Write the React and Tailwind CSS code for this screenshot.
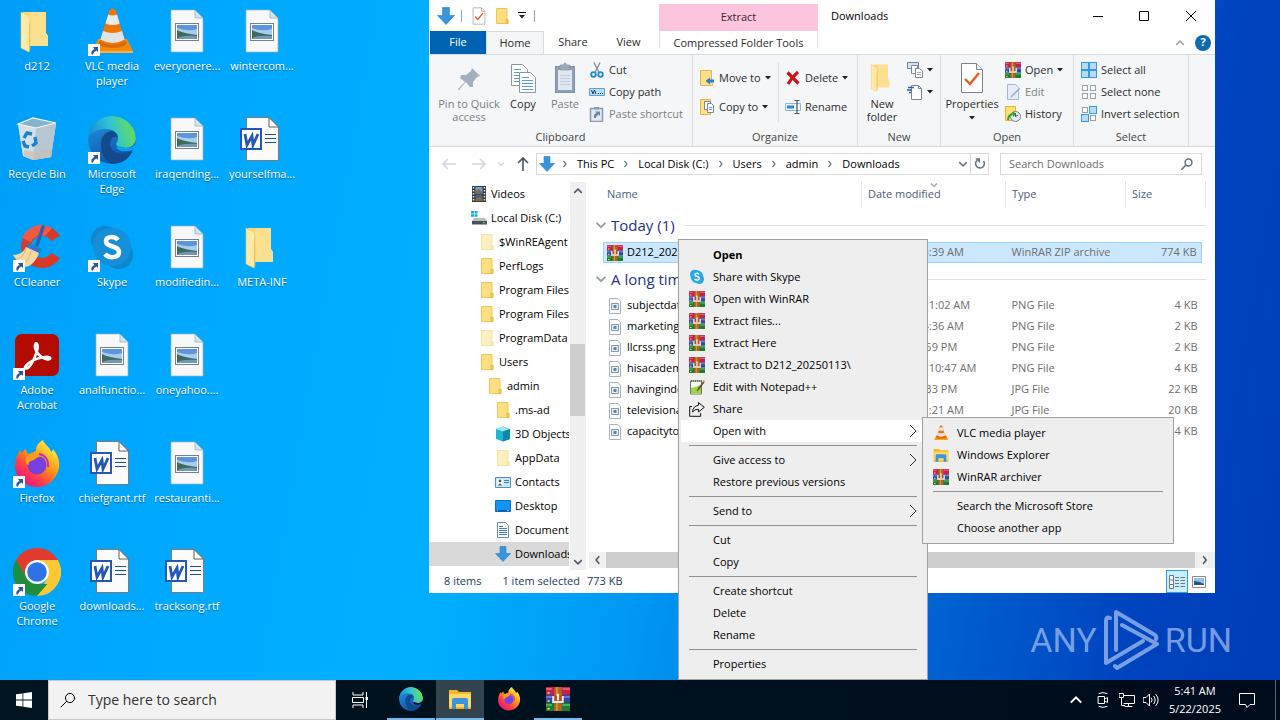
import React from "react";
import clsx from "clsx";

const stroke = { fill: "none", strokeLinecap: "round", strokeLinejoin: "round" };

/* ---------- icons ---------- */

function Folder({ className, pale }) {
  return (
    <svg viewBox="0 0 16 16" className={className}>
      <path d="M2.5.5h10.500V11l1 1v3.500H2.500z" fill={pale ? "#fdf0c0" : "#ffdf80"} stroke={pale ? "#f3e0a0" : "#e8b94a"} strokeWidth=".8" />
      <path d="M12 11.500h2v4h-2z" fill={pale ? "#fdeeb8" : "#ffd24d"} stroke={pale ? "#f0dc9c" : "#dfa92c"} strokeWidth=".6" />
    </svg>
  );
}

function OpenFolder({ className }) {
  return (
    <svg viewBox="0 0 48 48" className={className}>
      <path d="M10 4h23v21l2 3v10H10z" fill="#f9d978" />
      <path d="M17 4h16v21l2 3v10H17z" fill="#fbe08f" />
      <path d="M8 4l9 5v32l-1 3-8-4z" fill="#ffeaa8" stroke="#ecc765" strokeWidth=".6" />
      <path d="M16 20l1-11v32l-1 3z" fill="#e9bf5a" />
    </svg>
  );
}

function Cone({ className }) {
  return (
    <svg viewBox="0 0 48 48" className={className}>
      <path d="M10 31h29l6 12q0 2-2 2H6q-2 0-1-2z" fill="#f58a0b" />
      <path d="M4 43h41v2H4z" fill="#ffb03a" />
      <ellipse cx="24.500" cy="35" rx="14" ry="5" fill="#d96a04" />
      <path d="M21.500 2q3-3 6 0l9.500 31q-12.500 8-25 0z" fill="#ee7708" />
      <path d="M20.200 6.500q4.500 2 8.800 0l2.700 9q-7 3-14.200 0z" fill="#e8eaec" />
      <path d="M15 23q9.500 4 19 0l2.700 8.500q-12 7-24.400 0z" fill="#dfe3e6" />
    </svg>
  );
}

function RecycleBin({ className }) {
  return (
    <svg viewBox="0 0 48 48" className={className}>
      <path d="M5 8L20 2l23 5-5 34-18 3-10-4z" fill="#b9cfdc" />
      <path d="M5 8l18 4 20-5-5 34-18 3-10-4z" fill="#d2e0e8" />
      <path d="M23 12l20-5-5 34-18 3z" fill="#a9bcc9" opacity=".7" />
      <path d="M11 34l12 2 16-3-1 8-18 3-9-4z" fill="#cbbfb4" opacity=".7" />
      <path d="M5 8L20 2l23 5-20 5z" fill="#86b4cc" stroke="#f2f8fb" strokeWidth="1.200" />
      <g fill="none" stroke="#1e7fce" strokeWidth="3.400">
        <path d="M11 22l3-5 5 1" />
        <path d="M22 21l1 6-4 3" />
        <path d="M16 31l-4-1-2-5" />
      </g>
    </svg>
  );
}

function Edge({ className }) {
  return (
    <svg viewBox="0 0 48 48" className={className}>
      <defs>
        <linearGradient id="edgeTop" x1="0" y1=".6" x2="1" y2=".4">
          <stop offset="0" stopColor="#1a86d8" />
          <stop offset=".5" stopColor="#2fc3d3" />
          <stop offset="1" stopColor="#6be04f" />
        </linearGradient>
        <linearGradient id="edgeLeft" x1="0" y1="0" x2=".6" y2="1">
          <stop offset="0" stopColor="#2299e5" />
          <stop offset="1" stopColor="#0d4fa5" />
        </linearGradient>
        <clipPath id="edgeClip">
          <path d="M24 0a24 24 0 0 1 24 24q0 8-10 8l-8-2q-4 2 3 5 6 1 12-1-6 14-21 14A24 24 0 0 1 24 0z" />
        </clipPath>
      </defs>
      <g clipPath="url(#edgeClip)">
        <circle cx="24" cy="24" r="24" fill="url(#edgeLeft)" />
        <path d="M13 30c-1-8 4-15 12-15 4 0 6 3 5 6-7-2-9 6-7 10 2 7 12 9 22 3-4 10-12 14-20 14-8-3-12-10-12-18z" fill="#134a8e" />
        <path d="M0 23C1 9 11 0 24 0s24 10 24 22c0 7-6 10-11 10-6 0-9-2-9-4 0-1 2-2 2-6 0-5-5-9-12-9C9 13 2 17 0 23z" fill="url(#edgeTop)" />
      </g>
    </svg>
  );
}

function CCleaner({ className }) {
  return (
    <svg viewBox="0 0 48 48" className={className}>
      <path d="M47 12A21 21 0 1 0 47 34l-9-5a11 11 0 1 1 0-12z" fill="#d93a28" />
      <path d="M9 14a21 21 0 0 1 30-10l-7 8a11 11 0 0 0-14 6z" fill="#ee5a44" />
      <path d="M30 3l-6 18" stroke="#2a62b0" strokeWidth="3.500" strokeLinecap="round" />
      <path d="M15 19l14 6-3 5-13-6z" fill="#2f77c8" />
      <path d="M13 23l13 6c-3 9-9 14-15 14C7 40 3 36 0 31c6 0 11-3 13-8z" fill="#f4d9a4" />
      <path d="M13 25c-2 6-5 9-9 10M18 27c-1 6-4 10-8 13" stroke="#dcb678" strokeWidth="1" fill="none" />
    </svg>
  );
}

function Skype({ className, flat }) {
  const blue = flat ? "#28a8ea" : "#1490d8";
  return (
    <svg viewBox="0 0 48 48" className={className}>
      <rect x="3" y="2" width="28" height="28" rx="14" fill={flat ? blue : "#0f86cf"} />
      <rect x="17" y="17" width="28" height="28" rx="14" fill={flat ? blue : "#0e86d0"} />
      <circle cx="24" cy="23" r="19" fill={blue} />
      <path d="M30 16c-3-4-12-4-12 1 0 7 13 4 13 11 0 6-10 7-14 2" fill="none" stroke="#fff" strokeWidth="4.500" />
    </svg>
  );
}

function Acrobat({ className }) {
  return (
    <svg viewBox="0 0 48 48" className={className}>
      <rect x="2" y="2" width="44" height="42" rx="7" fill="#b30b00" />
      <path d="M12 35c3-5 11-9 20-10 8-1 6 4 1 2-7-2-12-9-11-14 1-4 4-1 2 6-2 6-5 13-8 16-2 2-5 2-4 0z" fill="none" stroke="#fff" strokeWidth="2.500" strokeLinejoin="round" />
    </svg>
  );
}

function Firefox({ className }) {
  return (
    <svg viewBox="0 0 48 48" className={className}>
      <defs>
        <linearGradient id="foxBody" x1=".85" y1=".1" x2=".2" y2=".95">
          <stop offset="0" stopColor="#fff04a" />
          <stop offset=".4" stopColor="#ff980e" />
          <stop offset=".75" stopColor="#ff3750" />
          <stop offset="1" stopColor="#e31587" />
        </linearGradient>
      </defs>
      <path d="M30 0c1 4 7 7 8 12 2-1 2-3 2-3 4 5 7 11 6 19-2 11-11 19-22 19C12 47 3 38 2 27c0-7 2-12 5-17 0 0 1 2 2 3 1-2 2-3 4-4 0 3 1 4 3 5l7-3c-1-4 3-9 7-11z" fill="url(#foxBody)" />
      <circle cx="24" cy="25" r="9.500" fill="#7a3fe0" />
      <path d="M13 17c4-4 12-5 16 0-4-1-5 1-8 3-3 1-6 1-5 5-4-1-4-5-3-8z" fill="#ff9a1c" />
      <path d="M26 14c6 1 10 6 9 13" fill="none" stroke="#b833b8" strokeWidth="2" />
    </svg>
  );
}

function Chrome({ className }) {
  return (
    <svg viewBox="0 0 48 48" className={className}>
      <path d="M24 12h20.800A24 24 0 0 1 24 48l10.400-18z" fill="#fcc934" />
      <path d="M3.200 12A24 24 0 0 1 44.800 12H24L13.600 30z" fill="#e33b2e" />
      <path d="M3.200 12l10.400 18L24 36h10.400L24 48A24 24 0 0 1 3.200 12z" fill="#1e8e3e" />
      <circle cx="24" cy="24" r="12" fill="#fff" />
      <circle cx="24" cy="24" r="9.800" fill="#2f73e8" />
    </svg>
  );
}

function ImageFile({ className }) {
  return (
    <svg viewBox="0 0 48 48" className={className}>
      <path d="M8 2h24l8 8v34H8z" fill="#f8f8f8" stroke="#9eb4c2" strokeWidth=".7" />
      <path d="M32 2v8h8z" fill="#cfe8f6" stroke="#9aa8b2" strokeWidth=".7" />
      <rect x="12.500" y="15.500" width="23" height="17" fill="#fff" stroke="#70808c" />
      <path d="M14 17h20v14H14z" fill="#a9cdef" />
      <path d="M14 17h20v4q-8 3-20-1z" fill="#5d95da" />
      <path d="M14 22q5 3 20 5v4H14z" fill="#3e6b60" />
      <path d="M16 29q8-2 18-1v3H14z" fill="#7499b4" />
    </svg>
  );
}

function WordFile({ className }) {
  return (
    <svg viewBox="0 0 48 48" className={className}>
      <path d="M8.500 1.500H31l9.500 9.500v33.500h-32z" fill="#fbfbfb" stroke="#7b7b7b" />
      <path d="M31 1.500V11h9.500z" fill="#fff" stroke="#5f5f5f" />
      <path d="M27 18.500h11M27 22.500h11M27 26.500h11" stroke="#1f4fa3" strokeWidth="1.200" />
      <rect x="3" y="13" width="20" height="20" fill="#fff" stroke="#2457b5" strokeWidth="2" />
      <path d="M7 18l2 11 5-9 1 9 5-11" fill="none" stroke="#2457b5" strokeWidth="2.800" />
    </svg>
  );
}

function ShortcutBadge() {
  return (
    <svg viewBox="0 0 12 12" className="absolute bottom-0 left-0 size-3">
      <path d="M0 0h12v12H0z" fill="#fff" />
      <path d="M3.500 10.500q-1-4 3-5.500L5 3h5v5L8.500 6.500Q5.500 7.500 5 10.500z" fill="#2b5797" />
    </svg>
  );
}

function WinRar({ className }) {
  return (
    <svg viewBox="0 0 16 16" className={className}>
      <path d="M0 0h16v5.300H0z" fill="#c4204a" />
      <path d="M0 5.300h16v5.200H0z" fill="#3346a8" />
      <path d="M0 10.500h16V16H0z" fill="#1f7a34" />
      <path d="M0 .8h4v1H0zM11 .8h5v1h-5z" fill="#ef6c8a" />
      <path d="M0 6.200h4v1H0zM11 6.200h5v1h-5z" fill="#6f8ae8" />
      <path d="M0 11.500h4v1H0zM11 11.500h5v1h-5z" fill="#58c46a" />
      <path d="M1 3.500h1.500v1H1zM1 8.800h1.500v1H1zM1 14h1.500v1H1z" fill="#ffe14d" />
      <path d="M5.500 0h5v16h-5z" fill="#b5651d" />
      <path d="M6.800 0h1v16h-1z" fill="#e09a40" />
      <path d="M4.800 6v4h6.400V6" fill="#b5501d" stroke="#f1ece2" strokeWidth="1.300" />
      <path d="M7.300 4.500h1.400V9H7.300z" fill="#f1ece2" />
    </svg>
  );
}

function Explorer({ className }) {
  return (
    <svg viewBox="0 0 24 24" className={className}>
      <path d="M1 3h8l2 2h12v17H1z" fill="#f5b62c" />
      <path d="M1 7h22v13H1z" fill="#ffd968" />
      <path d="M4 13q0-2 2-2h12q2 0 2 2v9h-4v-5H8v5H4z" fill="#3d95dd" />
    </svg>
  );
}

function DownArrow({ className }) {
  return (
    <svg viewBox="0 0 16 16" className={className}>
      <path d="M5 .5h6v7h4.500L8 15.500.5 7.500H5z" fill="#3a94dc" stroke="#2b7ec4" strokeWidth=".6" />
    </svg>
  );
}

function CheckPage({ className }) {
  return (
    <svg viewBox="0 0 24 32" className={className}>
      <path d="M1.500 1.500h15l6 6v23h-21z" fill="#fff" stroke="#7d8286" />
      <path d="M16.500 1.500v6h6" fill="#eef1f3" stroke="#7d8286" />
      <path d="M5 17l5 5 9-11" fill="none" stroke="#e65a24" strokeWidth="2.400" />
    </svg>
  );
}

function Pin({ className }) {
  return (
    <svg viewBox="0 0 32 32" className={className}>
      <path d="M19 6l8 8-3 1-4 5v5l-3 0-4-5-7 8-1 0 0-1 7-7-5-4 1-3h5l5-4z" fill="#a3b0bf" />
    </svg>
  );
}

function CopyPages({ className }) {
  return (
    <svg viewBox="0 0 32 32" className={className}>
      <g fill="#fff" stroke="#8b96a0">
        <path d="M4.500 2.500h11l5 5v16h-16z" />
        <path d="M12.500 10.500h11l5 5v15h-16z" />
      </g>
      <path d="M7 7.500h7M7 10.500h5M7 13.500h5M7 16.500h5M7 19.500h5M15 15.500h7M15 18.500h11M15 21.500h11M15 24.500h11M15 27.500h11" stroke="#5a9be0" />
    </svg>
  );
}

function Clipboard({ className }) {
  return (
    <svg viewBox="0 0 32 32" className={className}>
      <rect x="6.500" y="4.500" width="19" height="26" fill="#8fa1b8" stroke="#8091a8" />
      <path d="M9 8h14v20H9z" fill="#e0e7f1" />
      <path d="M11 13.500h10M11 16.500h10M11 19.500h10M11 22.500h10" stroke="#c0cddd" />
      <path d="M11 3h3q2-4 4 0h3v5H11z" fill="#9aa8b8" stroke="#7f8fa2" strokeWidth=".6" />
    </svg>
  );
}

function Scissors({ className }) {
  return (
    <svg viewBox="0 0 16 16" className={className}>
      <path d="M5 .5l5 10M11 .5l-5 10" stroke="#8a929a" strokeWidth="1.400" />
      <circle cx="4.500" cy="12.500" r="2.300" fill="none" stroke="#1f88cf" strokeWidth="1.800" />
      <circle cx="11.500" cy="12.500" r="2.300" fill="none" stroke="#1f88cf" strokeWidth="1.800" />
    </svg>
  );
}

function PathIcon({ className }) {
  return (
    <svg viewBox="0 0 16 16" className={className}>
      <path d="M.5 4.500h15v7H.5z" fill="#b9dcf7" stroke="#5ba3de" />
      <path d="M2.500 6l1.500 4 1.500-4L7 10M9 9.500h1M11 9.500h1M13 9.500h1" fill="none" stroke="#1c3f66" />
    </svg>
  );
}

function PasteShortcut({ className }) {
  return (
    <svg viewBox="0 0 16 16" className={className}>
      <path d="M1.500 2.500h12v13h-12z" fill="#e3e9f1" stroke="#8b9bb0" strokeWidth="1.500" />
      <path d="M5 1h5v2.500H5z" fill="#8b9bb0" />
      <path d="M5 12q-1-4 2.500-5L6 5.500h5v4.500L9.500 8.500Q7 9.500 7 12z" fill="#6f85a5" />
    </svg>
  );
}

function MoveTo({ className }) {
  return (
    <svg viewBox="0 0 16 16" className={className}>
      <path d="M1.500 .5h11v12l1 1v2h-12z" fill="#ffe08a" stroke="#e5b64a" />
      <path d="M15 9.500h-4V7.500L6.500 11l4.500 3.500v-2h4z" fill="#2b7cd3" />
    </svg>
  );
}

function CopyTo({ className }) {
  return (
    <svg viewBox="0 0 16 16" className={className}>
      <path d="M1.500 .5h10v15h-10z" fill="#ffe08a" stroke="#e5b64a" />
      <path d="M5.500 2.500h6v8h-6z" fill="#fff" stroke="#7a8894" />
      <path d="M8.500 4.500h4l2 2v7h-6z" fill="#fff" stroke="#7a8894" />
      <path d="M10 8.500h3M10 10.500h3" stroke="#5a9be0" />
    </svg>
  );
}

function DeleteX({ className }) {
  return (
    <svg viewBox="0 0 16 16" className={className}>
      <path d="M2.500 2.500q4 4 11 11M13 2q-6 5-10 12" fill="none" stroke="#d0111b" strokeWidth="3.200" />
    </svg>
  );
}

function RenameIcon({ className }) {
  return (
    <svg viewBox="0 0 16 16" className={className}>
      <path d="M.5 4.500h15v7H.5z" fill="#eef6fd" stroke="#8fb6d8" />
      <path d="M2 6.500h7v3H2z" fill="#2a86d6" />
      <path d="M9.500 1.500h5M12 1.500v13M9.500 14.500h5" stroke="#555" strokeWidth="1.200" />
    </svg>
  );
}

function NewItem({ className }) {
  return (
    <svg viewBox="0 0 16 16" className={className}>
      <path d="M.5 .5h11v6H.5z" fill="#cfe6f8" stroke="#6d8294" />
      <path d="M4.500 3.500h6v8h-6z" fill="#fff" stroke="#7a8894" />
      <path d="M8.500 6.500h4l3 2.500v6.500h-7z" fill="#fff" stroke="#7a8894" />
      <path d="M10 10.500h4M10 12.500h4" stroke="#9aa8b4" />
    </svg>
  );
}

function EasyAccess({ className }) {
  return (
    <svg viewBox="0 0 16 16" className={className}>
      <path d="M4.500 1.500h7l3 3v11h-10z" fill="#fff" stroke="#7a8894" />
      <path d="M11.500 1.500v3h3" fill="none" stroke="#7a8894" />
      <path d="M1 3.500h6M0 6h5M2 8.500h2" stroke="#2a62a8" strokeWidth="1.300" />
    </svg>
  );
}

function EditIcon({ className }) {
  return (
    <svg viewBox="0 0 16 16" className={className}>
      <path d="M2.500.5h8l3 3v12h-11z" fill="#e6edf8" stroke="#a3b6d3" />
      <path d="M14 4l-8 8-1 2 2-1 8-8z" fill="#93aacd" />
    </svg>
  );
}

function HistoryIcon({ className }) {
  return (
    <svg viewBox="0 0 16 16" className={className}>
      <path d="M.5.500h10v14h-10z" fill="#ffe070" stroke="#e0b53f" />
      <circle cx="10.500" cy="10.500" r="5" fill="#e4ebf0" stroke="#76838d" />
      <path d="M10.500 7v3.500l2.500-1.500" fill="none" stroke="#444" />
      <path d="M2 14q0-6 6-7V5l3 3-3 3V9q-4 1-4 5z" fill="#37a03a" />
    </svg>
  );
}

function SelectGrid({ className, on }) {
  const cells = [[0.5, 0.5], [8.5, 0.5], [0.5, 8.5], [8.5, 8.5]];
  return (
    <svg viewBox="0 0 16 16" className={className}>
      {cells.map(([x, y], i) => {
        const lit = on[i];
        return lit ? (
          <rect key={i} x={x} y={y} width="7" height="7" fill="#b5dcfb" stroke="#3b97e0" />
        ) : (
          <rect key={i} x={x + 1} y={y + 1} width="5" height="5" fill="#fff" stroke="#9a9fa3" />
        );
      })}
    </svg>
  );
}

function Film({ className }) {
  return (
    <svg viewBox="0 0 16 16" className={className}>
      <path d="M1 0h14v16H1z" fill="#3a3a3a" />
      <path d="M2.500 1v14M13.500 1v14" stroke="#e6e6e6" strokeWidth="1.500" strokeDasharray="1.500 1.500" />
      <path d="M4.500 1h7v6.500h-7z" fill="#6aa7d8" />
      <path d="M4.500 8.500h7V15h-7z" fill="#39648c" />
      <path d="M4.500 5l3-2 4 3v1.500h-7zM4.500 13l4-2 3 1v3h-7z" fill="#8a6848" />
    </svg>
  );
}

function Drive({ className }) {
  return (
    <svg viewBox="0 0 16 16" className={className}>
      <path d="M0 1h3v2.500H0zM3.600 1h3v2.500h-3zM0 4.200h3v2.500H0zM3.600 4.200h3v2.500h-3z" fill="#16a8e8" />
      <path d="M3 8h11l2 3H1z" fill="#b9bec3" />
      <path d="M1 11h15v3.500H1z" fill="#4a4f54" />
      <path d="M12 12.200h2v1h-2z" fill="#5be37a" />
    </svg>
  );
}

function Cube({ className }) {
  return (
    <svg viewBox="0 0 16 16" className={className}>
      <path d="M1 3l7-2.500L15 3v10l-7 2.500L1 13z" fill="#1fb6cf" />
      <path d="M1 3l7 2.500L15 3 8 .5z" fill="#9be8f2" />
      <path d="M8 5.500L15 3v10l-7 2.500z" fill="#0e87a8" />
    </svg>
  );
}

function Contact({ className }) {
  return (
    <svg viewBox="0 0 16 16" className={className}>
      <path d="M.5 3.500h15v10H.5z" fill="#cbe6f8" stroke="#4c8fc0" />
      <path d="M2.500 5h5v6.500h-5z" fill="#fff" />
      <circle cx="5" cy="7" r="1.400" fill="#555" />
      <path d="M3 11.500q2-4 4 0z" fill="#4b5a66" />
      <path d="M9 6.500h5M9 8.500h5" stroke="#3f82b8" />
    </svg>
  );
}

function DesktopIcon({ className }) {
  return (
    <svg viewBox="0 0 16 16" className={className}>
      <path d="M.5 2.500h15v11H.5z" fill="#1294f0" stroke="#0d6fc0" />
      <path d="M1 12h14v1.500H1z" fill="#0a5ea8" />
      <path d="M2 12.700h1M12 12.700h2" stroke="#fff" strokeWidth=".6" />
    </svg>
  );
}

function DocIcon({ className }) {
  return (
    <svg viewBox="0 0 16 16" className={className}>
      <path d="M2.500.5h8l3 3v12h-11z" fill="#fff" stroke="#6c8ba4" />
      <path d="M4 4.500h4M4 6.500h8M4 8.500h8M4 10.500h8M4 12.500h8" stroke="#3f7fb5" />
    </svg>
  );
}

function SmallImage({ className }) {
  return (
    <svg viewBox="0 0 16 16" className={className}>
      <path d="M2.500.5h8.500l2.500 3v12h-11z" fill="#fdfdfd" stroke="#a9b2b8" />
      <path d="M4.500 5.500h7v6h-7z" fill="#e6eff6" stroke="#8796a3" />
      <path d="M6.500 7h3v3h-3z" fill="#5a86a8" />
    </svg>
  );
}

function Notepad({ className }) {
  return (
    <svg viewBox="0 0 16 16" className={className}>
      <path d="M1.500 2h11v13h-11z" fill="#f5f8ee" stroke="#6f756a" />
      <path d="M2 9q5-1 10-3v8.500H2z" fill="#9fd33c" />
      <path d="M2 2h11" stroke="#555" strokeWidth="1.500" strokeDasharray="1 1" />
      <path d="M14.500 2L8.500 10l-.8 2.200 2-1.200 6-8z" fill="#5a4632" />
      <path d="M14.500.8L16 2l-1 1.500-1.500-1.200z" fill="#e7a13c" />
    </svg>
  );
}

function ShareIcon({ className }) {
  return (
    <svg viewBox="0 0 16 16" className={className}>
      <path d="M3 5.500H.7v9.800h11V12" fill="none" stroke="#111" />
      <path d="M9.500 1.500l5.800 4.800-5.800 4.700V8.300Q5.500 8 3.500 11q.5-6 6-6.700z" fill="none" stroke="#111" />
    </svg>
  );
}

function Caret({ className }) {
  return (
    <svg viewBox="0 0 6 4" className={clsx("h-1 w-1.5 shrink-0", className)}>
      <path d="M0 0h6L3 3.500z" fill="#222" />
    </svg>
  );
}

function Chevron({ dir = "right", className }) {
  const d = {
    right: "M5 2l5 6-5 6",
    down: "M2 5l6 6 6-6",
    up: "M2 11l6-6 6 6",
    left: "M10 2L5 8l5 6",
  }[dir];
  return (
    <svg viewBox="0 0 16 16" className={className}>
      <path d={d} fill="none" stroke="currentColor" strokeWidth="2.400" />
    </svg>
  );
}

function Magnifier({ className }) {
  return (
    <svg viewBox="0 0 16 16" className={className} {...stroke} stroke="currentColor">
      <circle cx="10" cy="6" r="4.600" />
      <path d="M6.500 9.500L1 15" />
    </svg>
  );
}

/* ---------- desktop ---------- */

const desktopItems = [
  { label: "d212", Icon: OpenFolder },
  { label: "Recycle Bin", Icon: RecycleBin },
  { label: "CCleaner", Icon: CCleaner, link: true },
  { label: "Adobe Acrobat", Icon: Acrobat, link: true },
  { label: "Firefox", Icon: Firefox, link: true },
  { label: "Google Chrome", Icon: Chrome, link: true },
  { label: "VLC media player", Icon: Cone, link: true },
  { label: "Microsoft Edge", Icon: Edge, link: true },
  { label: "Skype", Icon: Skype, link: true },
  { label: "analfunctio...", Icon: ImageFile },
  { label: "chiefgrant.rtf", Icon: WordFile },
  { label: "downloads...", Icon: WordFile },
  { label: "everyonere...", Icon: ImageFile },
  { label: "iraqending...", Icon: ImageFile },
  { label: "modifiedin...", Icon: ImageFile },
  { label: "oneyahoo....", Icon: ImageFile },
  { label: "restauranti...", Icon: ImageFile },
  { label: "tracksong.rtf", Icon: WordFile },
  { label: "wintercom...", Icon: ImageFile },
  { label: "yourselfma...", Icon: WordFile },
  { label: "META-INF", Icon: OpenFolder },
];

function Desktop() {
  return (
    <div className="grid w-max auto-cols-[75px] grid-flow-col grid-rows-[repeat(6,108px)]">
      {desktopItems.map(({ label, Icon, link }) => (
        <button key={label} className="flex flex-col items-center pt-2 pr-px text-white">
          <span className="relative size-12 shrink-0">
            <Icon className="size-12" />
            {link && <ShortcutBadge />}
          </span>
          <span className="mt-0.5 leading-[15px] [text-shadow:0_1px_1px_rgba(0,40,90,0.6)]">{label}</span>
        </button>
      ))}
    </div>
  );
}

/* ---------- explorer window ---------- */

function TitleBar() {
  return (
    <div className="flex h-[31px] items-stretch">
      <div className="flex w-[230px] items-center pl-2">
        <DownArrow className="mr-1.5 size-[18px]" />
        <span className="mr-2.5 h-3 w-px bg-gray-400" />
        <CheckPage className="h-[18px] w-3.5" />
        <Folder className="ml-2 size-4" />
        <span className="ml-2 flex flex-col items-center gap-0.5">
          <span className="h-px w-2 bg-black" />
          <Caret />
        </span>
        <span className="ml-2 h-3 w-px bg-gray-400" />
      </div>
      <div className="mt-1 flex w-[159px] items-center justify-center bg-[#fcc4dd] text-[#3b2430]">Extract</div>
      <div className="flex flex-1 items-center pt-px pl-[13px] text-black">Downloads</div>
      <div className="flex text-black">
        <button aria-label="Minimize" className="flex w-[46px] items-center justify-center">
          <svg viewBox="0 0 10 10" className="size-2.5"><path d="M0 5.500h10" stroke="currentColor" /></svg>
        </button>
        <button aria-label="Maximize" className="flex w-[46px] items-center justify-center">
          <svg viewBox="0 0 10 10" className="size-2.5"><path d="M.5.5h9v9h-9z" fill="none" stroke="currentColor" /></svg>
        </button>
        <button aria-label="Close" className="flex w-12 items-center justify-center">
          <svg viewBox="0 0 10 10" className="size-2.5"><path d="M0 0l10 10M10 0L0 10" stroke="currentColor" /></svg>
        </button>
      </div>
    </div>
  );
}

function Tabs() {
  return (
    <div className="flex h-[23px] items-stretch">
      <button className="ml-px w-14 bg-[#0063b1] text-white">File</button>
      <button className="-mb-px w-[58px] border border-b-0 border-[#dadbdc] bg-[#f5f6f7]">Home</button>
      <button className="w-[58px]">Share</button>
      <button className="w-[57px] pr-1">View</button>
      <button className="mb-1.5 w-[159px] border-x border-[#e3dfe1] pt-1.5 leading-none">Compressed Folder Tools</button>
      <div className="flex flex-1 items-center justify-end gap-2.5 pr-1">
        <Chevron dir="up" className="size-2.5 text-gray-400" />
        <button aria-label="Help" className="flex size-4 items-center justify-center rounded-full bg-[#0f6ab4] font-bold text-white">?</button>
      </div>
    </div>
  );
}

function Group({ title, className, children }) {
  return (
    <div className={clsx("flex flex-col border-r border-[#dcdddf]", className)}>
      <div className="flex flex-1">{children}</div>
      <div className="pb-0.5 text-center leading-[14px] text-[#444]">{title}</div>
    </div>
  );
}

function Big({ Icon, label, caret, off, iconClass = "size-8", className }) {
  return (
    <button className={clsx("flex flex-col items-center pt-[7px]", off ? "text-[#7b7f84]" : "text-[#2b2b2b]", className)}>
      <span className="flex h-8 items-center">
        <Icon className={iconClass} />
      </span>
      <span className="mt-[3px] leading-[13px]">{label}</span>
      {caret && <Caret className="mt-1.5" />}
    </button>
  );
}

function Small({ Icon, label, caret, off, className, ...rest }) {
  return (
    <button className={clsx("flex h-[22px] items-center gap-1 whitespace-nowrap", off ? "text-[#7b7f84]" : "text-[#2b2b2b]", className)}>
      <Icon className="size-4 shrink-0" {...rest} />
      {label}
      {caret && <Caret />}
    </button>
  );
}

const gridAll = [1, 1, 1, 1];
const gridNone = [0, 0, 0, 0];
const gridSwap = [0, 1, 1, 0];

function Ribbon() {
  return (
    <div className="flex h-[93px] border-y border-[#dadbdc] bg-[#f5f6f7]">
      <Group title="Clipboard" className="w-[264px]">
        <Big Icon={Pin} label="Pin to Quick access" off className="ml-2 w-16" />
        <Big Icon={CopyPages} label="Copy" className="w-11" />
        <Big Icon={Clipboard} label="Paste" off className="w-10" />
        <div className="pt-1 pl-1">
          <Small Icon={Scissors} label="Cut" />
          <Small Icon={PathIcon} label="Copy path" />
          <Small Icon={PasteShortcut} label="Paste shortcut" off />
        </div>
      </Group>
      <Group title="Organize" className="w-[165px]">
        <div className="my-2 flex w-[86px] flex-col gap-[7px] border-r border-[#dcdddf] pt-1 pl-1.5">
          <Small Icon={MoveTo} label="Move to" caret />
          <Small Icon={CopyTo} label="Copy to" caret />
        </div>
        <div className="my-2 flex flex-col gap-[7px] pt-1 pl-1.5">
          <Small Icon={DeleteX} label="Delete" caret />
          <Small Icon={RenameIcon} label="Rename" />
        </div>
      </Group>
      <Group title="New" className="w-[83px]">
        <Big Icon={OpenFolder} label="New folder" className="w-12" />
        <div className="pt-1 pl-px">
          <Small Icon={NewItem} caret />
          <Small Icon={EasyAccess} caret />
        </div>
      </Group>
      <Group title="Open" className="w-[133px]">
        <Big Icon={CheckPage} iconClass="h-8 w-6" label="Properties" caret className="w-[62px]" />
        <div className="pt-1 pl-0.5">
          <Small Icon={WinRar} label="Open" caret />
          <Small Icon={EditIcon} label="Edit" off />
          <Small Icon={HistoryIcon} label="History" />
        </div>
      </Group>
      <Group title="Select" className="w-[115px]">
        <div className="pt-1 pl-[7px]">
          <Small Icon={SelectGrid} label="Select all" on={gridAll} />
          <Small Icon={SelectGrid} label="Select none" on={gridNone} />
          <Small Icon={SelectGrid} label="Invert selection" on={gridSwap} />
        </div>
      </Group>
    </div>
  );
}

function Arrow({ d, className }) {
  return (
    <svg viewBox="0 0 16 16" className={className}>
      <path d={d} fill="none" stroke="currentColor" strokeWidth="1.600" />
    </svg>
  );
}

const crumbs = ["This PC", "Local Disk (C:)", "Users", "admin", "Downloads"];

function AddressBar() {
  return (
    <div className="flex h-[34px] items-center pr-[13px] pl-3">
      <button aria-label="Back" className="mr-3.5 text-gray-300"><Arrow className="size-4" d="M15 8H2M7 3L2 8l5 5" /></button>
      <button aria-label="Forward" className="mr-2.5 text-gray-300"><Arrow className="size-4" d="M1 8h13M9 3l5 5-5 5" /></button>
      <Chevron dir="down" className="mr-2.5 size-2 text-gray-300" />
      <button aria-label="Up" className="mr-[5px] text-gray-600"><Arrow className="size-4" d="M8 15V2M3 7l5-5 5 5" /></button>
      <nav className="flex h-[22px] flex-1 items-center border border-[#d9d9d9] pl-0.5 text-black">
        <DownArrow className="-mr-0.5 size-4" />
        {crumbs.map((c) => (
          <React.Fragment key={c}>
            <Chevron className="mx-2 size-2 text-gray-500" />
            <a href="#" className="whitespace-nowrap">{c}</a>
          </React.Fragment>
        ))}
        <Chevron dir="down" className="mr-0.5 ml-auto size-2.5 text-gray-500" />
        <button aria-label="Refresh" className="flex h-full w-[18px] items-center justify-center border-l border-[#d9d9d9] text-gray-500">
          <svg viewBox="0 0 16 16" className="size-3.5">
            <path d="M12 4.500a5 5 0 1 1-7-1" fill="none" stroke="currentColor" strokeWidth="1.800" />
            <path d="M2.500 1.500h5.500v5.500z" fill="currentColor" />
          </svg>
        </button>
      </nav>
      <label className="ml-[11px] flex h-[22px] w-[202px] items-center border border-[#d9d9d9] pr-2 pl-2">
        <input aria-label="Search Downloads" placeholder="Search Downloads" className="min-w-0 flex-1 outline-none placeholder:text-[#6d6d6d]" />
        <Magnifier className="size-3 stroke-2 text-gray-500" />
      </label>
    </div>
  );
}

const navItems = [
  ["Videos", Film, "pl-[42px]"],
  ["Local Disk (C:)", Drive, "pl-[42px]"],
  ["$WinREAgent", Folder, "pl-[50px]", true],
  ["PerfLogs", Folder, "pl-[50px]"],
  ["Program Files", Folder, "pl-[50px]"],
  ["Program Files (x86)", Folder, "pl-[50px]"],
  ["ProgramData", Folder, "pl-[50px]", true],
  ["Users", Folder, "pl-[50px]"],
  ["admin", Folder, "pl-[58px]"],
  [".ms-ad", Folder, "pl-[66px]"],
  ["3D Objects", Cube, "pl-[66px]"],
  ["AppData", Folder, "pl-[66px]", true],
  ["Contacts", Contact, "pl-[66px]"],
  ["Desktop", DesktopIcon, "pl-[66px]"],
  ["Documents", DocIcon, "pl-[66px]"],
  ["Downloads", DownArrow, "pl-[66px]"],
];

function NavTree() {
  return (
    <div className="flex w-[157px] shrink-0">
      <ul className="mr-px min-w-0 flex-1 overflow-hidden pt-px text-black">
        {navItems.map(([name, Icon, pad, pale]) => (
          <li key={name} className={clsx("flex h-6 items-center gap-1 whitespace-nowrap", pad, name === "Downloads" && "bg-[#d9d9d9]")}>
            {Icon === Folder ? <Folder className="size-4 shrink-0" pale={pale} /> : <Icon className="size-4 shrink-0" />}
            {name}
          </li>
        ))}
      </ul>
      <div className="mt-px flex w-4 flex-col bg-[#f0f0f0] text-gray-600">
        <button aria-label="Scroll up" className="flex h-[17px] items-center justify-center"><Chevron dir="up" className="size-2.5" /></button>
        <div className="flex-[145]" />
        <div className="mr-px flex-[72] bg-[#cdcdcd]" />
        <div className="flex-[137]" />
        <button aria-label="Scroll down" className="flex h-[17px] items-center justify-center"><Chevron dir="down" className="size-2.5" /></button>
      </div>
    </div>
  );
}

const archive = { name: "D212_20250113.zip", date: "5/22/2025 5:39 AM", type: "WinRAR ZIP archive", size: "774 KB" };

const files = [
  { name: "subjectdata.png", date: "11/9/2022 11:02 AM", type: "PNG File", size: "4 KB" },
  { name: "marketingof.png", date: "7/24/2023 4:36 AM", type: "PNG File", size: "2 KB" },
  { name: "llcrss.png", date: "6/4/2021 2:59 PM", type: "PNG File", size: "2 KB" },
  { name: "hisacademy.png", date: "10/12/2021 10:47 AM", type: "PNG File", size: "4 KB" },
  { name: "havingindex.jpg", date: "3/8/2022 5:33 PM", type: "JPG File", size: "22 KB" },
  { name: "televisionart.jpg", date: "8/15/2022 1:21 AM", type: "JPG File", size: "20 KB" },
  { name: "capacitytop.png", date: "9/17/2021 6:12 AM", type: "PNG File", size: "4 KB" },
];

function GroupRow({ title, className }) {
  return (
    <tr>
      <td colSpan={4} className={clsx("p-0", className)}>
        <div className="flex items-center pl-1.5">
          <Chevron dir="down" className="mr-1 size-3 text-gray-400" />
          <span className="text-[15px] leading-5 text-[#1e3287]">{title}</span>
          <span className="ml-2 h-px flex-1 bg-[#e2e2e2]" />
        </div>
      </td>
    </tr>
  );
}

function FileRow({ file, Icon, selected }) {
  const cell = clsx("flex h-[21px] items-center whitespace-nowrap", selected && "border-y border-[#99d1ff] bg-[#cce8ff]");
  return (
    <tr className="text-[#6d6d6d]">
      <td className="p-0">
        <div className={clsx(cell, "ml-3.5 gap-1 text-black", selected ? "border-l pl-[3px]" : "pl-1")}>
          <Icon className="size-4 shrink-0" />
          {file.name}
        </div>
      </td>
      <td className="p-0"><div className={clsx(cell, "pl-1.5")}>{file.date}</div></td>
      <td className="p-0"><div className={clsx(cell, "pl-1.5")}>{file.type}</div></td>
      <td className="p-0"><div className={clsx(cell, "mr-1 justify-end pr-1", selected && "border-r")}>{file.size}</div></td>
    </tr>
  );
}

const th = "relative border-r border-[#e5e5e5] pl-1.5 text-left font-normal";

function FileList() {
  return (
    <div className="ml-[3px] flex min-w-0 flex-1 flex-col">
      <div className="flex-1 pr-[9px]">
        <table className="w-full table-fixed border-collapse">
          <thead>
            <tr className="h-[27px] text-[#4c607a]">
              <th className={clsx(th, "pl-[18px]")}>Name</th>
              <th className={clsx(th, "w-36")}>
                Date modified
                <Chevron dir="down" className="absolute top-0 left-1/2 -ml-1 size-2 text-gray-400" />
              </th>
              <th className={clsx(th, "w-[120px]")}>Type</th>
              <th className={clsx(th, "w-20")}>Size</th>
            </tr>
          </thead>
          <tbody>
            <GroupRow title="Today (1)" className="h-[34px]" />
            <FileRow file={archive} Icon={WinRar} selected />
            <GroupRow title="A long time ago (7)" className="h-8" />
            {files.map((f) => (
              <FileRow key={f.name} file={f} Icon={SmallImage} />
            ))}
          </tbody>
        </table>
      </div>
      <div className="mb-0.5 flex h-4 bg-[#f0f0f0] text-gray-600">
        <button aria-label="Scroll left" className="flex w-[17px] items-center justify-center"><Chevron dir="left" className="size-2.5" /></button>
        <div className="flex-1 bg-[#cdcdcd]" />
        <button aria-label="Scroll right" className="flex w-5 items-center justify-center"><Chevron className="size-2.5" /></button>
      </div>
    </div>
  );
}

function StatusBar() {
  return (
    <div className="flex h-[23px] items-center pr-[5px] pl-[15px] text-[#1e395b]">
      <span className="mr-[21px]">8 items</span>
      <span className="mr-[7px]">1 item selected</span>
      <span>773 KB</span>
      <button aria-label="Details view" className="ml-auto flex h-[23px] w-[22px] items-center justify-center border border-[#26a0da] bg-[#cbeefc]">
        <svg viewBox="0 0 16 14" className="h-3.5 w-4">
          <path d="M.5.5h4v13h-4zM.5 5h4M.5 9.500h4" fill="#fff" stroke="#6b7a86" />
          <path d="M6 2.500h4M11.500 2.500H16M6 5.500h4M11.500 5.500H16M6 8.500h4M11.500 8.500H16M6 11.500h4M11.500 11.500H16" stroke="#6b7a86" />
        </svg>
      </button>
      <button aria-label="Large icons" className="flex h-[23px] w-[22px] items-center justify-center">
        <svg viewBox="0 0 14 12" className="h-3 w-3.5">
          <path d="M.5.5h13v11H.5z" fill="#fff" stroke="#8a8a8a" />
          <path d="M2 2h10v7H2z" fill="#8fc1ea" />
          <path d="M2 5q5 0 10 3v1H2z" fill="#28527a" />
        </svg>
      </button>
    </div>
  );
}

function ExplorerWindow() {
  return (
    <section className="absolute top-0 right-[65px] bottom-[87px] left-[429px] flex flex-col bg-white text-[#2b2b2b]">
      <TitleBar />
      <Tabs />
      <Ribbon />
      <AddressBar />
      <div className="flex min-h-0 flex-1">
        <NavTree />
        <FileList />
      </div>
      <StatusBar />
    </section>
  );
}

/* ---------- context menus ---------- */

const mainMenu = [
  { label: "Open", bold: true },
  { label: "Share with Skype", Icon: (p) => <Skype flat {...p} /> },
  { label: "Open with WinRAR", Icon: WinRar },
  { label: "Extract files...", Icon: WinRar },
  { label: "Extract Here", Icon: WinRar },
  { label: "Extract to D212_20250113\\", Icon: WinRar },
  { label: "Edit with Notepad++", Icon: Notepad },
  { label: "Share", Icon: ShareIcon },
  { label: "Open with", sub: true, active: true },
  null,
  { label: "Give access to", sub: true },
  { label: "Restore previous versions" },
  null,
  { label: "Send to", sub: true },
  null,
  { label: "Cut" },
  { label: "Copy" },
  null,
  { label: "Create shortcut" },
  { label: "Delete" },
  { label: "Rename" },
  null,
  { label: "Properties" },
];

const openWithMenu = [
  { label: "VLC media player", Icon: Cone },
  { label: "Windows Explorer", Icon: Explorer },
  { label: "WinRAR archiver", Icon: WinRar },
  null,
  { label: "Search the Microsoft Store" },
  { label: "Choose another app" },
];

function Menu({ items, className }) {
  return (
    <div role="menu" className={clsx("absolute border border-[#a0a0a0] bg-[#eeeeee] px-0.5 py-1 text-black", className)}>
      {items.map((item, i) =>
        item ? (
          <button
            key={i}
            role="menuitem"
            className={clsx("flex h-[22px] w-full items-center pl-2 text-left", item.active && "bg-white", item.bold && "font-bold")}
          >
            <span className="mr-2 size-4">{item.Icon && <item.Icon className="size-4" />}</span>
            <span className="flex-1">{item.label}</span>
            {item.sub && (
              <svg viewBox="0 0 8 14" className="mr-2 h-3.5 w-2">
                <path d="M1 1l6 6-6 6" fill="none" stroke="#333" />
              </svg>
            )}
          </button>
        ) : (
          <div key={i} className="mx-2 flex h-[7px] items-center"><span className="h-px flex-1 bg-[#919191]" /></div>
        )
      )}
    </div>
  );
}

/* ---------- taskbar ---------- */

function TaskButton({ label, Icon, open, active }) {
  return (
    <button
      aria-label={label}
      className={clsx("flex w-12 items-center justify-center border-b-2", open ? "border-[#76b9ed]" : "border-transparent", active && "bg-[#33444f]")}
    >
      <Icon className="size-6" />
    </button>
  );
}

function Taskbar() {
  return (
    <footer className="flex h-10 bg-linear-to-r from-[#00151f] to-[#000b1c] text-white">
      <button aria-label="Start" className="flex w-12 items-center justify-center">
        <svg viewBox="0 0 16 16" className="size-4">
          <path d="M0 2.300l6.500-.9v6.200H0zM7.300 1.300L16 0v7.600H7.300zM0 8.400h6.500v6.200L0 13.700zM7.300 8.400H16V16l-8.700-1.200z" fill="#fff" />
        </svg>
      </button>
      <label className="flex w-72 items-center border border-[#c8c8c8] bg-[#f2f2f2] pl-[11px] text-black">
        <Magnifier className="mr-3 size-4" />
        <input aria-label="Type here to search" placeholder="Type here to search" className="min-w-0 flex-1 text-sm outline-none placeholder:text-[#333]" />
      </label>
      <button aria-label="Task View" className="flex w-12 items-center justify-center">
        <svg viewBox="0 0 16 16" className="size-4">
          <path d="M1 0v3h10V0M1 16v-3h10v3M.5 5.500h11v5H.5zM14.500 0v16" fill="none" stroke="#fff" />
          <path d="M13.500 5h2.500v3h-2.500z" fill="#fff" />
        </svg>
      </button>
      <div className="ml-[3px] flex gap-px">
        <TaskButton label="Microsoft Edge" Icon={Edge} open />
        <TaskButton label="File Explorer" Icon={Explorer} open active />
        <TaskButton label="Firefox" Icon={Firefox} />
        <TaskButton label="WinRAR" Icon={WinRar} open />
      </div>
      <div className="ml-auto flex items-center">
        <Chevron dir="up" className="mr-3 size-3.5" />
        <svg viewBox="0 0 16 16" className="mr-2 size-4" {...stroke} stroke="#fff">
          <path d="M4 1.500q4-2 8 0M4 14.500q4 2 8 0M3.500 4.500h6v7h-6zM9.500 7l3-1.500v5l-3-1.500" />
        </svg>
        <svg viewBox="0 0 16 16" className="mr-2 size-4" {...stroke} stroke="#fff">
          <path d="M5 3.500h10.500v8H5M6 14.500h7M9.500 11.500v3M.5 1.500h4v4h-4zM2.500 5.500v8h3" />
        </svg>
        <svg viewBox="0 0 16 16" className="mr-2.5 size-4" {...stroke} stroke="#fff">
          <path d="M.5 5.500H3l3.500-3.500v12L3 10.500H.5zM8.500 6q1.500 2 0 4M10.800 4.200q3 3.800 0 7.600M13 2.500q4.500 5.500 0 11" />
        </svg>
        <div className="text-center leading-[18px]">
          <div>5:41 AM</div>
          <div>5/22/2025</div>
        </div>
        <button aria-label="Notifications" className="mr-5 ml-[18px]">
          <svg viewBox="0 0 16 16" className="size-4" fill="none" stroke="#fff">
            <path d="M.5 1.500h15v11H11L8 15.500l-1.500-3h-6z" />
          </svg>
        </button>
        <span className="mr-1 h-10 w-px bg-[#5b6470]" />
      </div>
    </footer>
  );
}

function Watermark() {
  return (
    <div className="absolute right-12 bottom-2 flex items-center gap-1.5 font-['Roboto',sans-serif] text-[34px] leading-none text-[#a9c6f3]/70">
      <span>ANY</span>
      <svg viewBox="0 0 56 64" className="h-16 w-14" fill="none" stroke="currentColor" strokeWidth="4" strokeLinejoin="round" strokeLinecap="round">
        <path d="M7 10q-4-2-4 3v42l37-22" />
        <path d="M13 42V4l39 23q2 2 1 4" />
        <path d="M19 17l35 19-40 24-2-2" />
      </svg>
      <span>RUN</span>
    </div>
  );
}

export default function App() {
  return (
    <div className="flex h-screen flex-col overflow-hidden font-['Open_Sans','Noto_Sans',sans-serif] text-[11px]">
      <main className="relative flex-1 bg-[linear-gradient(100deg,#009df6_0%,#00a9ff_18%,#00b0ff_38%,#009af4_52%,#0078e0_66%,#005fd0_76%,#0043be_89%,#003cb8_100%)]">
        <Desktop />
        <Watermark />
        <ExplorerWindow />
        <Menu items={mainMenu} className="top-[239px] left-[678px] w-[250px]" />
        <Menu items={openWithMenu} className="top-[417px] left-[922px] w-[252px]" />
      </main>
      <Taskbar />
    </div>
  );
}
